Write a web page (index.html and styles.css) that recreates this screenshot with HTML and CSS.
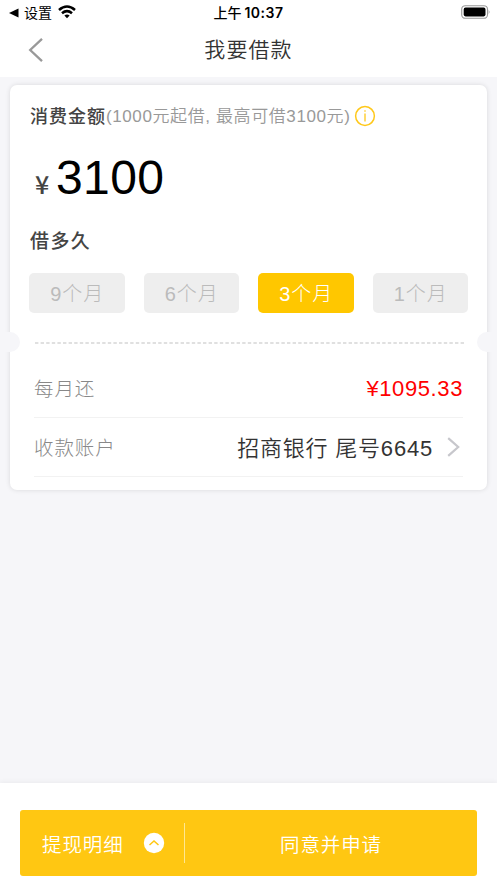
FILE: index.html
```html
<!DOCTYPE html>
<html lang="zh-CN">
<head>
<meta charset="utf-8">
<title>我要借款</title>
<link rel="stylesheet" href="styles.css">
</head>
<body>
<header class="top">
  <div class="status">
    <div class="status-left">
      <svg width="10" height="10" viewBox="0 0 10 10"><path d="M0 5 9.5.5v9z"/></svg>
      <span class="return">设置</span>
      <svg class="wifi" width="18" height="14" viewBox="0 0 18 14"><g fill="none" stroke="#000" stroke-width="2.6"><path d="M1 4.9q8-6.8 16 0"/><path d="M4 8.3q5-4.2 10 0"/></g><path d="M6.4 10.6q2.6-2.1 5.2 0L9 13.3z"/></svg>
    </div>
    <div class="clock">上午<b>10:37</b></div>
    <svg class="battery" width="30" height="14" viewBox="0 0 30 14"><rect x=".7" y=".7" width="25.8" height="12.6" rx="3.6" fill="none" stroke="#999" stroke-width="1.1"/><rect x="2.7" y="2.6" width="21.8" height="8.8" rx="1.8"/><path d="M27.7 4.8q1.8 2.2 0 4.4z" fill="#999"/></svg>
  </div>
  <nav class="nav">
    <svg class="back" width="16" height="26" viewBox="0 0 16 26"><path d="M14 1.8 2.2 13 14 24.2" fill="none" stroke="#999" stroke-width="2.3"/></svg>
    <h1>我要借款</h1>
  </nav>
</header>
<main class="card">
  <div class="caption"><b>消费金额</b><span>(1000元起借, 最高可借3100元)</span>
    <svg width="22" height="22" viewBox="0 0 22 22"><circle cx="11" cy="11" r="9.4" fill="none" stroke="#ffc81a" stroke-width="1.5"/><path d="M11 8.6v8M11 5.2v1.6" stroke="#ffc81a" stroke-width="1.3"/></svg>
  </div>
  <div class="amount"><span class="yen">¥</span><span class="number">3100</span></div>
  <h2>借多久</h2>
  <div class="terms">
    <button>9个月</button><button>6个月</button><button class="active">3个月</button><button>1个月</button>
  </div>
  <div class="divider"><svg width="429" height="2"><path d="M0 1h429" stroke="#d6d6d6" stroke-width="1.3" stroke-dasharray="3.4 2.2"/></svg></div>
  <div class="rows">
    <div class="row"><span>每月还</span><span class="pay">¥1095.33</span></div>
    <div class="row"><span>收款账户</span><span class="bank">招商银行 尾号6645</span><svg width="13" height="20" viewBox="0 0 13 20"><path d="m1.2 1.2 10 8.8-10 8.8" fill="none" stroke="#c7c7cc" stroke-width="2.2"/></svg></div>
  </div>
</main>
<footer class="footer">
  <div class="actions">
    <div class="detail"><span>提现明细</span><svg width="22" height="22" viewBox="0 0 22 22"><circle cx="11" cy="11" r="10.2" fill="#fff"/><path d="m6.5 13 4.5-4 4.5 4" fill="none" stroke="#ffc712" stroke-width="1.5"/></svg></div>
    <div class="agree">同意并申请</div>
  </div>
</footer>
</body>
</html>
```
FILE: styles.css
```css
* { box-sizing: border-box; margin: 0; }
body {
  display: flex;
  flex-direction: column;
  height: 883px;
  overflow: hidden;
  background: #f6f6f9;
  font-family: "Liberation Sans", "Noto Sans CJK SC", sans-serif;
  color: #333;
}
svg { display: block; flex: none; }
.top { height: 77px; background: #fff; }
.status {
  display: grid;
  grid-template-columns: 1fr auto 1fr;
  align-items: center;
  height: 26px;
  padding: 0 6px 0 9px;
  color: #000;
}
.status-left { display: flex; align-items: center; }
.return { margin: 0 6px 0 5px; font-size: 14px; line-height: 26px; }
.wifi { margin-top: -2px; }
.clock { margin-right: 3px; font: 500 14px/26px Inter, "Noto Sans CJK SC", sans-serif; white-space: nowrap; }
.clock b { margin-left: 3px; font-weight: 600; font-size: 14px; letter-spacing: .5px; }
.battery { justify-self: end; margin-top: -2px; }
.nav {
  display: grid;
  grid-template-columns: 50px 1fr 50px;
  align-items: center;
  height: 48px;
}
.back { margin-left: 28px; }
h1 { font-size: 21px; font-weight: 350; line-height: 48px; letter-spacing: 1.1px; text-align: center; }
.card {
  position: relative;
  height: 405px;
  margin: 8px 10px 0;
  padding: 0 19px;
  border-radius: 7px;
  background: #fff;
  box-shadow: 0 0 5px rgba(0, 0, 0, .12);
}
.caption { display: flex; align-items: center; height: 62px; padding-left: 1px; white-space: nowrap; }
.caption b { margin-bottom: 2px; font-size: 18px; font-weight: 500; letter-spacing: 1px; color: #444; }
.caption span { margin-bottom: 3px; font-size: 17px; font-weight: 350; letter-spacing: .6px; color: #999; }
.caption svg { margin-left: 4px; }
.amount { display: flex; align-items: baseline; height: 68px; padding-left: 6px; line-height: 62px; }
.yen { width: 21px; font: 500 25px "Noto Sans CJK SC", sans-serif; color: #444; }
.number { font-size: 48px; letter-spacing: .4px; color: #000; }
h2 { height: 58px; padding-left: 1px; font-size: 19px; font-weight: 500; line-height: 53px; letter-spacing: 1.4px; color: #444; }
.terms { display: grid; grid-template-columns: repeat(4, 1fr); gap: 19px; height: 40px; }
.terms button {
  padding: 0 0 2px 1px;
  border: 0;
  border-radius: 5px;
  background: #eee;
  color: #bbb;
  font: 300 20px "Liberation Sans", "Noto Sans CJK SC", sans-serif;
  letter-spacing: 1px;
}
.terms .active { background: #ffc700; color: #fff; }
.divider { display: flex; align-items: flex-start; height: 46px; padding: 29px 0 0 6px; }
.divider::before, .divider::after {
  content: "";
  position: absolute;
  left: -10px;
  width: 20px;
  height: 20px;
  margin-top: -10px;
  border-radius: 0 10px 10px 0;
  background: #f6f6f9;
}
.divider::after { right: -10px; left: auto; border-radius: 10px 0 0 10px; }
.rows { padding: 0 5px; }
.row { display: flex; align-items: center; height: 59px; border-bottom: 1px solid #f2f2f2; font-size: 19.5px; font-weight: 300; letter-spacing: .9px; color: #888; }
.row > span { margin-bottom: 2px; }
.row .pay, .row .bank { margin-left: auto; font-size: 22px; font-weight: 350; letter-spacing: .8px; }
.row .pay { margin-bottom: -2px; color: #f00; letter-spacing: .6px; }
.row .bank { color: #333; }
.row svg { margin: 0 3px 0 14px; }
.footer { height: 100px; margin-top: auto; padding: 27px 20px 7px; background: #fff; box-shadow: 0 -1px 5px rgba(0, 0, 0, .05); }
.actions { display: flex; align-items: center; height: 66px; border-radius: 3px; background: #ffc712; color: #fff; font-size: 19.5px; font-weight: 350; letter-spacing: .9px; }
.detail { display: flex; align-items: center; justify-content: space-between; width: 165px; height: 40px; padding: 0 19px 0 22px; border-right: 1px solid #ffe791; }
.agree { flex: 1; text-align: center; }
```
